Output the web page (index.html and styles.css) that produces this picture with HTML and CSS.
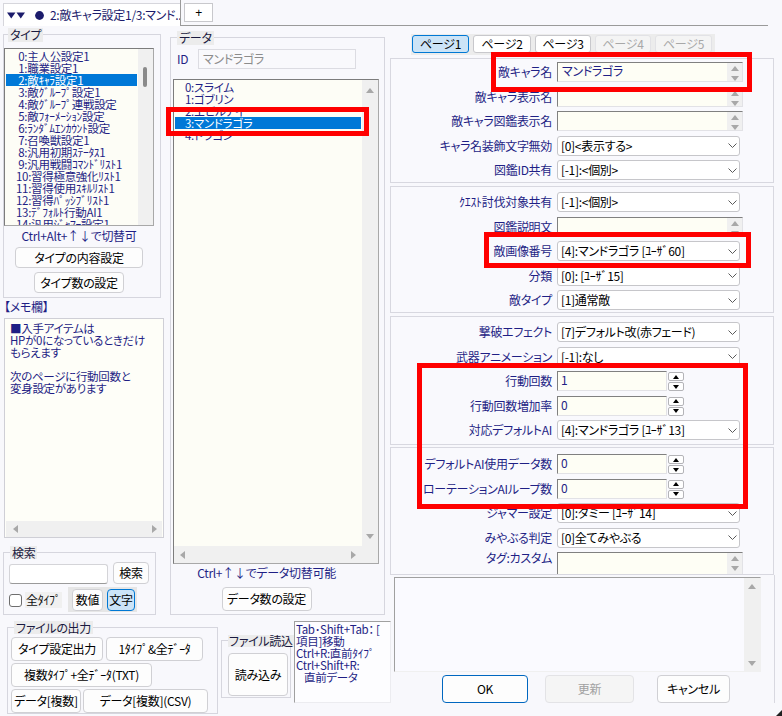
FILE: index.html
```html
<!DOCTYPE html>
<html lang="ja">
<head>
<meta charset="utf-8">
<title>敵キャラ設定</title>
<link rel="stylesheet" href="styles.css">
</head>
<body>
<div class="window">
  <header class="tabbar">
    <div class="doc-tab">
      <svg class="tab-icon" width="40" height="9" viewBox="0 0 40 9"><polygon points="0,1.5 8.5,1.5 4.25,7.5"/><polygon points="9.5,1.5 18,1.5 13.75,7.5"/><circle cx="32.5" cy="4.5" r="4.4"/></svg>
      <span class="doc-title">2:敵キャラ設定1/3:マンド..</span>
    </div>
    <div class="tab-rest"><div class="plus-tab">+</div></div>
  </header>

  <div class="main">
    <div class="leftmid">
      <div class="upper">
        <div class="leftcol">
          <section class="group type-group">
            <div class="legend">タイプ</div>
            <div class="listbox type-list">
              <div class="items">
                <div class="item">&nbsp;0:主人公設定1</div>
                <div class="item">&nbsp;1:職業設定1</div>
                <div class="item sel">&nbsp;2:敵ｷｬﾗ設定1</div>
                <div class="item">&nbsp;3:敵ｸﾞﾙｰﾌﾟ設定1</div>
                <div class="item">&nbsp;4:敵ｸﾞﾙｰﾌﾟ連戦設定</div>
                <div class="item">&nbsp;5:敵ﾌｫｰﾒｰｼｮﾝ設定</div>
                <div class="item">&nbsp;6:ﾗﾝﾀﾞﾑｴﾝｶｳﾝﾄ設定</div>
                <div class="item">&nbsp;7:召喚獣設定1</div>
                <div class="item">&nbsp;8:汎用初期ｽﾃｰﾀｽ1</div>
                <div class="item">&nbsp;9:汎用戦闘ｺﾏﾝﾄﾞﾘｽﾄ1</div>
                <div class="item">10:習得極意強化ﾘｽﾄ1</div>
                <div class="item">11:習得使用ｽｷﾙﾘｽﾄ1</div>
                <div class="item">12:習得ﾊﾟｯｼﾌﾞﾘｽﾄ1</div>
                <div class="item">13:ﾃﾞﾌｫﾙﾄ行動AI1</div>
                <div class="item">14:汎用ｼﾞｬﾏｰ設定1</div>
              </div>
              <div class="vscroll"><div class="thumb"></div></div>
            </div>
            <div class="hint type-hint">Ctrl+Alt+↑↓で切替可</div>
            <button class="btn btn-type-content">タイプの内容設定</button>
            <button class="btn btn-type-count">タイプ数の設定</button>
          </section>

          <div class="memo-label">【メモ欄】</div>
          <div class="memo">
            <div class="memo-text">■入手アイテムは<br>HPが0になっているときだけ<br>もらえます<br><br>次のページに行動回数と<br>変身設定があります</div>
            <div class="hscroll memo-h"><span class="tri left"></span><span class="tri right"></span></div>
          </div>

          <section class="group search-group">
            <div class="legend">検索</div>
            <div class="search-row">
              <div class="search-input"></div>
              <button class="btn search-btn">検索</button>
            </div>
            <div class="search-row2">
              <div class="chk"><span class="box"></span><span class="chk-text">全ﾀｲﾌﾟ</span></div>
              <div class="toggle-group">
                <button class="btn tgl-num">数値</button>
                <button class="btn tgl-str on">文字</button>
              </div>
            </div>
          </section>
        </div>

        <div class="midcol">
          <section class="group data-group">
            <div class="legend">データ</div>
            <div class="id-row">
              <span class="id-label">ID</span>
              <div class="id-input">マンドラゴラ</div>
            </div>
            <div class="listbox data-list">
              <div class="dl-main">
                <div class="items">
                  <div class="item">0:スライム</div>
                  <div class="item">1:ゴブリン</div>
                  <div class="item">2:エビルアイ</div>
                  <div class="item sel">3:マンドラゴラ</div>
                  <div class="item">4:ドラゴン</div>
                </div>
                <div class="vscroll v2"><span class="tri up"></span><span class="tri down"></span></div>
              </div>
              <div class="hscroll-row">
                <div class="hscroll"><span class="tri left"></span><span class="tri right"></span></div>
                <div class="corner"></div>
              </div>
            </div>
            <div class="data-foot">
              <div class="hint">Ctrl+↑↓でデータ切替可能</div>
              <button class="btn btn-data-count">データ数の設定</button>
            </div>
          </section>
        </div>
      </div>

      <div class="bottom">
        <section class="group out-group">
          <div class="legend">ファイルの出力</div>
          <div class="brow brow-a">
            <button class="btn b-typeout">タイプ設定出力</button>
            <button class="btn b-onetype">1ﾀｲﾌﾟ&amp;全ﾃﾞｰﾀ</button>
          </div>
          <div class="brow">
            <button class="btn b-multi">複数ﾀｲﾌﾟ+全ﾃﾞｰﾀ(TXT)</button>
          </div>
          <div class="brow">
            <button class="btn b-dmulti">データ[複数]</button>
            <button class="btn b-dcsv">データ[複数](CSV)</button>
          </div>
        </section>
        <section class="group in-group">
          <div class="legend">ファイル読込</div>
          <button class="btn b-read">読み込み</button>
        </section>
        <div class="help">Tab･Shift+Tab：&nbsp;[<br>項目]移動<br>Ctrl+R:直前ﾀｲﾌﾟ<br>Ctrl+Shift+R:<br><span class="indent">直前データ</span></div>
      </div>
    </div>

    <div class="right">
      <nav class="pagetabs">
        <div class="ptab active pt1">ページ1</div>
        <div class="ptab pt2">ページ2</div>
        <div class="ptab pt3">ページ3</div>
        <div class="ptab disabled pt4">ページ4</div>
        <div class="ptab disabled pt5">ページ5</div>
      </nav>

      <div class="panel p1">
        <div class="row"><div class="lbl">敵キャラ名</div><div class="tbox"><span class="tv">マンドラゴラ</span><span class="tscroll"><span class="tri up"></span><span class="tri down"></span></span></div></div>
        <div class="row"><div class="lbl">敵キャラ表示名</div><div class="tbox"><span class="tv"></span><span class="tscroll"><span class="tri up"></span><span class="tri down"></span></span></div></div>
        <div class="row"><div class="lbl">敵キャラ図鑑表示名</div><div class="tbox"><span class="tv"></span><span class="tscroll"><span class="tri up"></span><span class="tri down"></span></span></div></div>
        <div class="row"><div class="lbl">キャラ名装飾文字無効</div><div class="combo"><span class="cv">[0]&lt;表示する&gt;</span><svg class="chev" width="9" height="5" viewBox="0 0 9 5"><polyline points="0.5,0.5 4.5,4.5 8.5,0.5"/></svg></div></div>
        <div class="row"><div class="lbl">図鑑ID共有</div><div class="combo"><span class="cv">[-1]:&lt;個別&gt;</span><svg class="chev" width="9" height="5" viewBox="0 0 9 5"><polyline points="0.5,0.5 4.5,4.5 8.5,0.5"/></svg></div></div>
      </div>

      <div class="panel p2">
        <div class="row"><div class="lbl">ｸｴｽﾄ討伐対象共有</div><div class="combo"><span class="cv">[-1]:&lt;個別&gt;</span><svg class="chev" width="9" height="5" viewBox="0 0 9 5"><polyline points="0.5,0.5 4.5,4.5 8.5,0.5"/></svg></div></div>
        <div class="row"><div class="lbl">図鑑説明文</div><div class="tbox"><span class="tv"></span><span class="tscroll"><span class="tri up"></span><span class="tri down"></span></span></div></div>
        <div class="row"><div class="lbl">敵画像番号</div><div class="combo"><span class="cv">[4]:マンドラゴラ [ﾕｰｻﾞ60]</span><svg class="chev" width="9" height="5" viewBox="0 0 9 5"><polyline points="0.5,0.5 4.5,4.5 8.5,0.5"/></svg></div></div>
        <div class="row"><div class="lbl">分類</div><div class="combo"><span class="cv">[0]: [ﾕｰｻﾞ15]</span><svg class="chev" width="9" height="5" viewBox="0 0 9 5"><polyline points="0.5,0.5 4.5,4.5 8.5,0.5"/></svg></div></div>
        <div class="row"><div class="lbl">敵タイプ</div><div class="combo"><span class="cv">[1]通常敵</span><svg class="chev" width="9" height="5" viewBox="0 0 9 5"><polyline points="0.5,0.5 4.5,4.5 8.5,0.5"/></svg></div></div>
      </div>

      <div class="panel p3">
        <div class="row"><div class="lbl">撃破エフェクト</div><div class="combo"><span class="cv">[7]デフォルト改(赤フェード)</span><svg class="chev" width="9" height="5" viewBox="0 0 9 5"><polyline points="0.5,0.5 4.5,4.5 8.5,0.5"/></svg></div></div>
        <div class="row"><div class="lbl">武器アニメーション</div><div class="combo"><span class="cv">[-1]:なし</span><svg class="chev" width="9" height="5" viewBox="0 0 9 5"><polyline points="0.5,0.5 4.5,4.5 8.5,0.5"/></svg></div></div>
        <div class="row"><div class="lbl">行動回数</div><div class="spin-in">1</div><div class="spin-btns"><span class="sb"><span class="stri up"></span></span><span class="sb"><span class="stri down"></span></span></div></div>
        <div class="row"><div class="lbl">行動回数増加率</div><div class="spin-in">0</div><div class="spin-btns"><span class="sb"><span class="stri up"></span></span><span class="sb"><span class="stri down"></span></span></div></div>
        <div class="row"><div class="lbl">対応デフォルトAI</div><div class="combo"><span class="cv">[4]:マンドラゴラ [ﾕｰｻﾞ13]</span><svg class="chev" width="9" height="5" viewBox="0 0 9 5"><polyline points="0.5,0.5 4.5,4.5 8.5,0.5"/></svg></div></div>
      </div>

      <div class="panel p4">
        <div class="row"><div class="lbl">デフォルトAI使用データ数</div><div class="spin-in">0</div><div class="spin-btns"><span class="sb"><span class="stri up"></span></span><span class="sb"><span class="stri down"></span></span></div></div>
        <div class="row"><div class="lbl">ローテーションAIループ数</div><div class="spin-in">0</div><div class="spin-btns"><span class="sb"><span class="stri up"></span></span><span class="sb"><span class="stri down"></span></span></div></div>
        <div class="row"><div class="lbl">ジャマー設定</div><div class="combo"><span class="cv">[0]:ダミー [ﾕｰｻﾞ14]</span><svg class="chev" width="9" height="5" viewBox="0 0 9 5"><polyline points="0.5,0.5 4.5,4.5 8.5,0.5"/></svg></div></div>
        <div class="row"><div class="lbl">みやぶる判定</div><div class="combo"><span class="cv">[0]全てみやぶる</span><svg class="chev" width="9" height="5" viewBox="0 0 9 5"><polyline points="0.5,0.5 4.5,4.5 8.5,0.5"/></svg></div></div>
        <div class="row tall"><div class="lbl">タグ:カスタム</div><div class="tbox tbox-tall"><span class="tv"></span><span class="tscroll"><span class="tri up"></span><span class="tri down"></span></span></div></div>
      </div>

      <div class="lower">
        <div class="bigtext">
          <div class="bigscroll"><span class="tri up"></span><span class="tri down"></span></div>
        </div>
        <div class="actions">
          <button class="btn b-ok">OK</button>
          <button class="btn b-update" disabled>更新</button>
          <button class="btn b-cancel">キャンセル</button>
        </div>
      </div>
    </div>
  </div>

  <div class="mark mark-list"></div>
  <div class="mark mark-name"></div>
  <div class="mark mark-image"></div>
  <div class="mark mark-action"></div>
  <svg class="grip" width="6" height="6" viewBox="0 0 6 6"><polygon points="6,0 6,6 0,6"/></svg>
</div>
</body>
</html>
```

FILE: styles.css
```css
* { box-sizing: border-box; }
html, body { margin: 0; padding: 0; }
body {
  width: 782px;
  height: 716px;
  overflow: hidden;
  background: #f8f8fc;
  font-family: "Noto Sans CJK JP", "Noto Sans", sans-serif;
  font-size: 12px;
  line-height: 12px;
  color: #1f1f85;
  font-feature-settings: "palt";
  letter-spacing: -0.3px;
}
.window { position: relative; width: 782px; height: 716px; }

/* top tab bar */
.tabbar { display: flex; height: 26px; }
.doc-tab {
  margin: 3px 0 0 3px;
  width: 177px;
  height: 23px;
  background: #fff;
  border: 1px solid #d6d6dc;
  border-right: none;
  border-bottom: none;
  display: flex;
  align-items: center;
  padding-left: 3px;
  gap: 3px;
  color: #1c1c6c;
  white-space: nowrap;
}
.tab-icon { fill: #1c1c6c; flex: none; }
.tab-rest {
  width: 588px;
  height: 26px;
  border-left: 1px solid #9a9a9a;
  border-bottom: 1px solid #9a9a9a;
}
.plus-tab {
  margin: 3px 0 0 3px;
  width: 29px;
  height: 19px;
  background: #fff;
  border: 1px solid #c8c8cc;
  display: flex;
  align-items: center;
  justify-content: center;
  color: #000;
  font-family: "Liberation Sans", sans-serif;
}

/* main layout */
.main { display: flex; height: 690px; }
.leftmid { width: 388px; display: flex; flex-direction: column; }
.upper { display: flex; height: 591px; }
.leftcol { width: 166px; display: flex; flex-direction: column; align-items: flex-start; }
.midcol { width: 222px; display: flex; flex-direction: column; }
.bottom { display: flex; height: 99px; align-items: flex-start; }
.right { width: 394px; display: flex; flex-direction: column; align-items: flex-start; }

/* generic controls */
.btn {
  font-family: inherit;
  font-size: 12px;
  line-height: 12px;
  letter-spacing: inherit;
  font-feature-settings: "palt";
  color: #000;
  background: #fdfdfd;
  border: 1px solid #d0d0d4;
  border-radius: 4px;
  padding: 0;
  margin: 0;
  display: flex;
  align-items: center;
  justify-content: center;
  white-space: nowrap;
  flex: none;
}
.group {
  border: 1px solid #d6d6de;
  display: flex;
  flex-direction: column;
  align-items: flex-start;
  flex: none;
}
.legend {
  background: #ececec;
  color: #1a1a40;
  height: 14px;
  line-height: 14px;
  padding: 0 2px;
  white-space: nowrap;
}
.hint { height: 13px; line-height: 13px; text-align: center; white-space: nowrap; }

.tri { display: block; width: 0; height: 0; border-style: solid; flex: none; }
.tri.up { border-width: 0 4px 5px 4px; border-color: transparent transparent #a8a8a8 transparent; }
.tri.down { border-width: 5px 4px 0 4px; border-color: #a8a8a8 transparent transparent transparent; }
.tri.left { border-width: 4px 5px 4px 0; border-color: transparent #a8a8a8 transparent transparent; }
.tri.right { border-width: 4px 0 4px 5px; border-color: transparent transparent transparent #a8a8a8; }

.listbox {
  background: #fdfdf6;
  border: 1px solid #a8a8a8;
  border-top-color: #7c7c7c;
  border-left-color: #7c7c7c;
  display: flex;
  overflow: hidden;
  flex: none;
}
.items { flex: 1; min-width: 0; padding: 1px 1px 0 1px; overflow: hidden; font-size: 11.5px; }
.item { height: 12px; line-height: 12px; padding-left: 10px; white-space: nowrap; }
.item.sel { background: #0078d7; color: #fff; }
.vscroll { width: 15px; background: #f0f0f0; flex: none; }
.hscroll {
  background: #f0f0f0;
  display: flex;
  align-items: center;
  justify-content: space-between;
}

/* type group */
.type-group { margin: 8px 0 0 3px; width: 158px; height: 264px; }
.type-group .legend { margin: -7px 0 0 4px; }
.type-list { margin-top: 6px; width: 150px; height: 178px; }
.type-list .vscroll { width: 15px; padding: 18px 0 0 5px; }
.thumb { width: 4px; height: 20px; background: #8a8a8a; border-radius: 2px; }
.type-hint { margin-top: 3px; width: 150px; }
.btn-type-content { margin: 5px 0 0 11px; width: 128px; height: 21px; }
.btn-type-count { margin: 4px 0 0 30px; width: 90px; height: 21px; }

/* memo */
.memo-label { margin: 2px 0 0 4px; height: 13px; line-height: 13px; white-space: nowrap; }
.memo {
  margin: 5px 0 0 4px;
  width: 160px;
  height: 220px;
  border: 1px solid #cfcfd6;
  background: #fefef8;
  display: flex;
  flex-direction: column;
  flex: none;
}
.memo-text { flex: 1; padding: 3px 0 0 5px; white-space: nowrap; overflow: hidden; font-size: 11.5px; }
.memo-h { height: 16px; margin: 0 1px; padding: 0 5px 0 7px; flex: none; }

/* search */
.search-group { margin: 14px 0 0 3px; width: 153px; height: 63px; }
.search-group .legend { margin: -7px 0 0 6px; height: 13px; line-height: 13px; }
.search-row { margin-top: 3px; display: flex; align-items: flex-end; height: 22px; }
.search-input {
  margin-left: 5px;
  width: 99px;
  height: 20px;
  background: #fff;
  border: 1px solid #d4d4d8;
  border-bottom-color: #9a9a9a;
  border-radius: 3px;
}
.search-btn { margin-left: 5px; width: 36px; height: 22px; }
.search-row2 { margin-top: 3px; display: flex; align-items: center; height: 25px; }
.chk { margin-left: 5px; width: 59px; display: flex; align-items: center; gap: 3px; color: #111; white-space: nowrap; }
.chk .box {
  width: 13px;
  height: 13px;
  border: 1px solid #6e6e6e;
  border-radius: 3px;
  background: #fff;
  flex: none;
  margin-top: 2px;
}
.chk-text { background: #f0f0f0; padding: 2px 1px; }
.toggle-group {
  width: 69px;
  height: 25px;
  background: #e6e6e6;
  display: flex;
  align-items: center;
  padding-left: 4px;
  gap: 4px;
}
.tgl-num { width: 31px; height: 22px; }
.tgl-str { width: 28px; height: 22px; }
.btn.on { background: #cce4f7; border-color: #0078d4; }

/* data group */
.data-group { margin: 11px 0 0 4px; width: 215px; height: 578px; }
.data-group .legend { margin: -7px 0 0 6px; }
.id-row { margin-top: 4px; height: 20px; display: flex; align-items: center; }
.id-label { margin-left: 6px; width: 21px; }
.id-input {
  width: 158px;
  height: 20px;
  background: #f9f9fc;
  border: 1px solid #dcdce2;
  color: #8c8c8c;
  line-height: 18px;
  padding-left: 4px;
  white-space: nowrap;
}
.data-list { margin: 10px 0 0 2px; width: 206px; height: 485px; flex-direction: column; }
.dl-main { flex: 1; display: flex; min-height: 0; }
.v2 {
  width: 16px;
  display: flex;
  flex-direction: column;
  align-items: center;
  justify-content: space-between;
  padding: 8px 0 7px;
}
.hscroll-row { height: 17px; display: flex; flex: none; }
.hscroll-row .hscroll { flex: 1; padding: 0 6px; }
.corner { width: 16px; background: #f0f0f0; }
.data-foot { width: 191px; display: flex; flex-direction: column; align-items: center; }
.data-foot .hint { margin-top: 2px; }
.btn-data-count { margin-top: 8px; width: 90px; height: 24px; }

/* bottom row */
.out-group { margin: 10px 0 0 7px; width: 211px; height: 87px; }
.out-group .legend { margin: -7px 0 0 6px; height: 13px; line-height: 13px; }
.brow { display: flex; margin-top: 2px; }
.brow-a { margin-top: 3px; }
.brow .btn { height: 24px; }
.b-typeout { margin-left: 3px; width: 92px; }
.b-onetype { margin-left: 3px; width: 97px; }
.b-multi { margin-left: 3px; width: 141px; }
.b-dmulti { margin-left: 3px; width: 70px; }
.b-dcsv { margin-left: 2px; width: 125px; }
.in-group { margin: 23px 0 0 3px; width: 70px; height: 58px; }
.in-group .legend { margin: -6px 0 0 6px; height: 12px; line-height: 12px; padding: 0 1px; }
.b-read { margin: 6px 0 0 6px; width: 60px; height: 43px; }
.help {
  margin: 4px 0 0 3px;
  width: 97px;
  height: 82px;
  background: #fdfdff;
  border: 1px solid;
  border-color: #a0a0a0 #ececf0 #ececf0 #a0a0a0;
  padding: 1px 0 0 1px;
  white-space: nowrap;
  overflow: hidden;
  flex: none;
  font-size: 11.5px;
}
.indent { padding-left: 8px; }

/* right side */
.pagetabs {
  margin: 8px 0 0 23px;
  width: 304px;
  height: 21px;
  background: #ececec;
  display: flex;
  gap: 4px;
  padding: 1px 0 0 1px;
}
.ptab {
  height: 18px;
  border: 1px solid #c8c8cc;
  border-radius: 3px;
  background: #fff;
  color: #000;
  text-align: center;
  line-height: 16px;
  white-space: nowrap;
}
.pt1 { width: 57px; }
.pt2 { width: 58px; }
.pt3 { width: 56px; }
.pt4 { width: 56px; }
.pt5 { width: 57px; }
.ptab.active { background: #cce4f7; border-color: #0078d4; }
.ptab.disabled { background: #f4f4f4; border-color: #e2e2e6; color: #a8a8a8; }

.panel {
  margin: 3px 0 0 2px;
  width: 384px;
  border: 1px solid #d8d8e0;
  background: #f9f9fd;
  display: flex;
  flex-direction: column;
  gap: 4.5px;
  overflow: hidden;
  flex: none;
}
.p1 { height: 125px; padding-top: 3px; }
.p2 { height: 127px; padding-top: 5px; }
.p3 { height: 129px; padding-top: 5px; }
.p4 { margin-top: 2px; height: 128px; padding-top: 6px; }

.row { display: flex; align-items: center; height: 20px; flex: none; }
.row.tall { align-items: flex-start; height: 24px; }
.lbl {
  width: 166px;
  padding-right: 5px;
  text-align: right;
  white-space: nowrap;
  flex: none;
}
.tbox {
  width: 186px;
  height: 20px;
  border: 1px solid;
  border-color: #808080 #e2e2e6 #e2e2e6 #808080;
  background: #fefef5;
  display: flex;
  overflow: hidden;
}
.tbox-tall { height: 24px; }
.tv { flex: 1; padding: 2px 0 0 4px; white-space: nowrap; }
.tscroll {
  width: 15px;
  background: #f0f0f0;
  display: flex;
  flex-direction: column;
  align-items: center;
  gap: 5px;
  padding-top: 3px;
}
.combo {
  width: 183px;
  height: 20px;
  border: 1px solid #c6c6ca;
  border-radius: 3px;
  background: #fff;
  color: #000;
  display: flex;
  align-items: center;
  padding-left: 3px;
  white-space: nowrap;
}
.chev { margin-left: auto; margin-right: 2px; fill: none; stroke: #5a5a5a; stroke-width: 1; flex: none; }
.spin-in {
  width: 110px;
  height: 20px;
  border: 1px solid;
  border-color: #808080 #e2e2e6 #e2e2e6 #808080;
  background: #fefef5;
  padding: 2px 0 0 3px;
}
.spin-btns {
  margin-left: 1px;
  width: 16px;
  height: 20px;
  display: flex;
  flex-direction: column;
  gap: 1px;
  padding-top: 1px;
}
.sb {
  height: 9px;
  border: 1px solid #b4b4b8;
  border-radius: 2px;
  background: #fff;
  display: flex;
  align-items: center;
  justify-content: center;
}
.stri { display: block; width: 0; height: 0; border-style: solid; }
.stri.up { border-width: 0 3px 4px 3px; border-color: transparent transparent #000 transparent; }
.stri.down { border-width: 4px 3px 0 3px; border-color: #000 transparent transparent transparent; }

.lower {
  width: 387px;
  height: 128px;
  border-right: 1px solid #d8d8e0;
  display: flex;
  flex-direction: column;
  align-items: flex-start;
  flex: none;
}
.bigtext {
  margin: 2px 0 0 6px;
  width: 367px;
  height: 99px;
  border: 1px solid;
  border-color: #a0a0a0 #f0f0f0 #f0f0f0 #a0a0a0;
  background: #fafaff;
  display: flex;
  justify-content: flex-end;
}
.bigscroll {
  width: 16px;
  background: #f0f0f0;
  display: flex;
  flex-direction: column;
  align-items: center;
  justify-content: space-between;
  padding: 6px 0 5px;
}
.actions { margin-top: 3px; height: 28px; display: flex; }
.actions .btn { height: 28px; }
.b-ok { margin-left: 54px; width: 86px; border-color: #0067c0; }
.b-update { margin-left: 17px; width: 89px; background: #f5f5f5; border-color: #e3e3e6; color: #a0a0a0; }
.b-cancel { margin-left: 23px; width: 73px; }

/* red highlight overlays */
.mark { position: absolute; border: 5px solid #ff0000; pointer-events: none; }
.mark-list { left: 166px; top: 107px; width: 203px; height: 29px; }
.mark-name { left: 491px; top: 52px; width: 261px; height: 40px; }
.mark-image { left: 484px; top: 232px; width: 267px; height: 36px; }
.mark-action { left: 417px; top: 363px; width: 331px; height: 146px; }

/* window size grip */
.grip { position: absolute; right: 0; bottom: 0; fill: #202020; }
```
